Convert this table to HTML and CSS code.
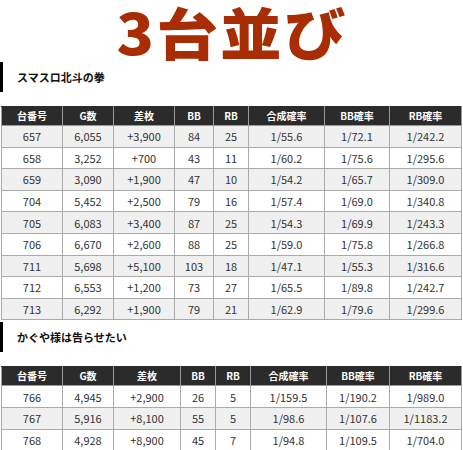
FILE: index.html
```html
<!DOCTYPE html>
<html lang="ja">
<head>
<meta charset="utf-8">
<link rel="stylesheet" href="styles.css">
</head>
<body>
<div class="page">
  <h1 class="title"><span class="title-text">3台並び</span></h1>

  <h2 class="section">スマスロ北斗の拳</h2>
  <table class="data t1">
    <colgroup>
      <col class="c1"><col class="c2"><col class="c3"><col class="c4"><col class="c5"><col class="c6"><col class="c7"><col class="c8">
    </colgroup>
    <thead>
      <tr><th>台番号</th><th>G数</th><th>差枚</th><th>BB</th><th>RB</th><th>合成確率</th><th>BB確率</th><th>RB確率</th></tr>
    </thead>
    <tbody>
      <tr><td>657</td><td>6,055</td><td>+3,900</td><td>84</td><td>25</td><td>1/55.6</td><td>1/72.1</td><td>1/242.2</td></tr>
      <tr><td>658</td><td>3,252</td><td>+700</td><td>43</td><td>11</td><td>1/60.2</td><td>1/75.6</td><td>1/295.6</td></tr>
      <tr><td>659</td><td>3,090</td><td>+1,900</td><td>47</td><td>10</td><td>1/54.2</td><td>1/65.7</td><td>1/309.0</td></tr>
      <tr><td>704</td><td>5,452</td><td>+2,500</td><td>79</td><td>16</td><td>1/57.4</td><td>1/69.0</td><td>1/340.8</td></tr>
      <tr><td>705</td><td>6,083</td><td>+3,400</td><td>87</td><td>25</td><td>1/54.3</td><td>1/69.9</td><td>1/243.3</td></tr>
      <tr><td>706</td><td>6,670</td><td>+2,600</td><td>88</td><td>25</td><td>1/59.0</td><td>1/75.8</td><td>1/266.8</td></tr>
      <tr><td>711</td><td>5,698</td><td>+5,100</td><td>103</td><td>18</td><td>1/47.1</td><td>1/55.3</td><td>1/316.6</td></tr>
      <tr><td>712</td><td>6,553</td><td>+1,200</td><td>73</td><td>27</td><td>1/65.5</td><td>1/89.8</td><td>1/242.7</td></tr>
      <tr><td>713</td><td>6,292</td><td>+1,900</td><td>79</td><td>21</td><td>1/62.9</td><td>1/79.6</td><td>1/299.6</td></tr>
    </tbody>
  </table>

  <h2 class="section second">かぐや様は告らせたい</h2>
  <table class="data t2">
    <colgroup>
      <col class="c1"><col class="c2"><col class="c3"><col class="c4"><col class="c5"><col class="c6"><col class="c7"><col class="c8">
    </colgroup>
    <thead>
      <tr><th>台番号</th><th>G数</th><th>差枚</th><th>BB</th><th>RB</th><th>合成確率</th><th>BB確率</th><th>RB確率</th></tr>
    </thead>
    <tbody>
      <tr><td>766</td><td>4,945</td><td>+2,900</td><td>26</td><td>5</td><td>1/159.5</td><td>1/190.2</td><td>1/989.0</td></tr>
      <tr><td>767</td><td>5,916</td><td>+8,100</td><td>55</td><td>5</td><td>1/98.6</td><td>1/107.6</td><td>1/1183.2</td></tr>
      <tr><td>768</td><td>4,928</td><td>+8,900</td><td>45</td><td>7</td><td>1/94.8</td><td>1/109.5</td><td>1/704.0</td></tr>
    </tbody>
  </table>
</div>
</body>
</html>
```

FILE: styles.css
```css
html, body {
  margin: 0;
  padding: 0;
  background: #ffffff;
}

body {
  font-family: "Noto Sans CJK JP", "Noto Sans", sans-serif;
  color: #333333;
}

.page {
  width: 463px;
}

.title {
  margin: 0;
  font-size: 56px;
  line-height: 62px;
  font-weight: 900;
  color: #a82d03;
  text-align: center;
  white-space: nowrap;
}

.title-text {
  display: inline-block;
  letter-spacing: 2px;
  transform: scaleX(1.1);
  transform-origin: center;
  padding-left: 2px;
}

.section {
  margin: 0 0 14px 0;
  height: 30px;
  line-height: 30px;
  border-left: 3px solid #000000;
  padding-left: 14px;
  font-size: 11px;
  font-weight: 700;
  color: #111111;
}

.section.second {
  margin-top: 2px;
}

.data {
  border-collapse: collapse;
  table-layout: fixed;
  width: 460px;
  margin-left: 1px;
  font-size: 11px;
  text-align: center;
}

.data th {
  background: #2b2b2b;
  color: #ffffff;
  font-weight: 700;
  font-size: 10px;
  height: 18px;
  padding: 0;
  border: 1px solid #9a9a9a;
  border-top-color: #2b2b2b;
  line-height: 18px;
}

.data td {
  height: 20.6px;
  padding: 0;
  border: 1px solid #aaaaaa;
  line-height: 18px;
  color: #333333;
}

.t1 tbody tr:nth-child(odd) td {
  background: #f0f0f0;
}

.t2 tbody tr:nth-child(even) td {
  background: #f0f0f0;
}

.t1 .c1 { width: 61px; }
.t1 .c2 { width: 51px; }
.t1 .c3 { width: 61px; }
.t1 .c4 { width: 39px; }
.t1 .c5 { width: 35px; }
.t1 .c6 { width: 76px; }
.t1 .c7 { width: 65px; }
.t1 .c8 { width: 72px; }

.t2 .c1 { width: 61px; }
.t2 .c2 { width: 51px; }
.t2 .c3 { width: 67px; }
.t2 .c4 { width: 35px; }
.t2 .c5 { width: 35px; }
.t2 .c6 { width: 76px; }
.t2 .c7 { width: 63px; }
.t2 .c8 { width: 72px; }
```
